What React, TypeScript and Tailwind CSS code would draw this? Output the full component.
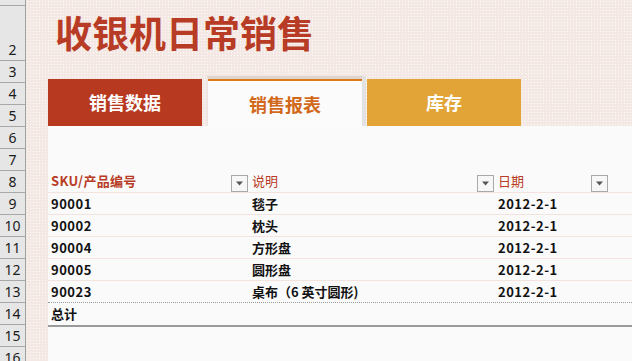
import React from "react";

const rowLabels = ["", "2", "3", "4", "5", "6", "7", "8", "9", "10", "11", "12", "13", "14", "15", "16"];

function FilterBtn() {
  return (
    <div className="w-[17px] h-[17px] border border-[#a9a9a9] bg-[#f7f7f7] flex items-center justify-center shrink-0">
      <svg width="9" height="5" viewBox="0 0 9 5">
        <path d="M1 0.5 L8 0.5 L4.5 4.5 Z" fill="#555" />
      </svg>
    </div>
  );
}

const rows = [
  { sku: "90001", desc: "毯子", date: "2012-2-1" },
  { sku: "90002", desc: "枕头", date: "2012-2-1" },
  { sku: "90004", desc: "方形盘", date: "2012-2-1" },
  { sku: "90005", desc: "圆形盘", date: "2012-2-1" },
  { sku: "90023", desc: "桌布（6 英寸圆形)", date: "2012-2-1" },
];

export default function App() {
  const font = { fontFamily: '"Noto Sans CJK SC", "Noto Sans", sans-serif' };
  return (
    <div className="w-[632px] h-[361px] overflow-hidden flex bg-[#f4e8e4]" style={font}>
      {/* row headers */}
      <div className="w-[26px] shrink-0 bg-[#e6e6e6] border-r border-[#a0a0a0] flex flex-col">
        {rowLabels.map((l, i) => (
          <div
            key={i}
            className={`${i === 0 ? "h-[6px]" : i === 1 ? "h-[55px]" : "h-[22px]"} shrink-0 border-b border-[#a8a8a8] flex items-end justify-center pb-[2px] text-[14px] leading-[16px] text-[#1a1a1a]`}
            style={{ fontFamily: '"Noto Sans", sans-serif' }}
          >
            {l}
          </div>
        ))}
      </div>

      {/* main */}
      <div className="flex-1 flex flex-col bg-[radial-gradient(#fdfaf9_0.7px,transparent_0.8px)] bg-[length:3px_3px]">
        <div className="h-[60px] shrink-0 flex items-center pl-[29px] pt-[5px]">
          <span className="text-[37px] leading-none font-bold text-[#b83c25]">收银机日常销售</span>
        </div>
        <div className="h-[66px] shrink-0 flex items-end pl-[22px]">
          <div className="w-[154px] h-[47px] bg-[#b63920] flex items-center justify-center text-white text-[18px] font-bold">
            销售数据
          </div>
          <div className="ml-[5px] w-[155px] h-[50px] flex flex-col border-t-[3px] border-[#ddd3cf] bg-[#fbfbfb] border-l border-l-[#ece4e1]">
            <div className="h-[2px] bg-[#e07a17]" />
            <div className="flex-1 flex items-center justify-center text-[#d2691a] text-[18px] font-bold pt-[2px]">
              销售报表
            </div>
          </div>
          <div className="w-[4px] h-[50px] bg-[#e2e2e2]" />
          <div className="ml-[1px] w-[154px] h-[47px] bg-[#e2a436] flex items-center justify-center text-white text-[18px] font-bold">
            库存
          </div>
        </div>

        <div className="flex-1 ml-[22px] bg-[#fafafa] flex flex-col">
          <div className="h-[44px] shrink-0" />
          {/* header */}
          <div className="h-[23px] shrink-0 flex border-b border-[#f3e2dd] text-[13px]">
            <div className="w-[202px] flex items-end justify-between pl-[3px] pr-[2px]">
              <span className="self-center font-bold text-[#b83c25] tracking-[0.3px]">SKU/产品编号</span>
              <FilterBtn />
            </div>
            <div className="w-[246px] flex items-end justify-between pl-[2px] pr-[2px]">
              <span className="self-center text-[#b83c25]">说明</span>
              <FilterBtn />
            </div>
            <div className="w-[114px] flex items-end justify-between pl-[2px] pr-[2px]">
              <span className="self-center text-[#b83c25]">日期</span>
              <FilterBtn />
            </div>
            <div className="flex-1" />
          </div>
          {rows.map((r, i) => (
            <div
              key={r.sku}
              className={`h-[22px] shrink-0 flex items-center text-[13px] font-bold text-[#111] ${
                i === rows.length - 1 ? "border-b border-dotted border-[#9a9a9a]" : "border-b border-[#f3e2dd]"
              }`}
            >
              <div className="w-[202px] pl-[3px] tracking-[0.5px]">{r.sku}</div>
              <div className="w-[246px] pl-[2px]">{r.desc}</div>
              <div className="w-[114px] pl-[2px] tracking-[0.5px]">{r.date}</div>
            </div>
          ))}
          <div className="h-[24px] shrink-0 flex items-center border-b-[2px] border-[#9a9a9a] text-[13px] font-bold text-[#111] pl-[3px]">
            总计
          </div>
        </div>
      </div>
    </div>
  );
}
